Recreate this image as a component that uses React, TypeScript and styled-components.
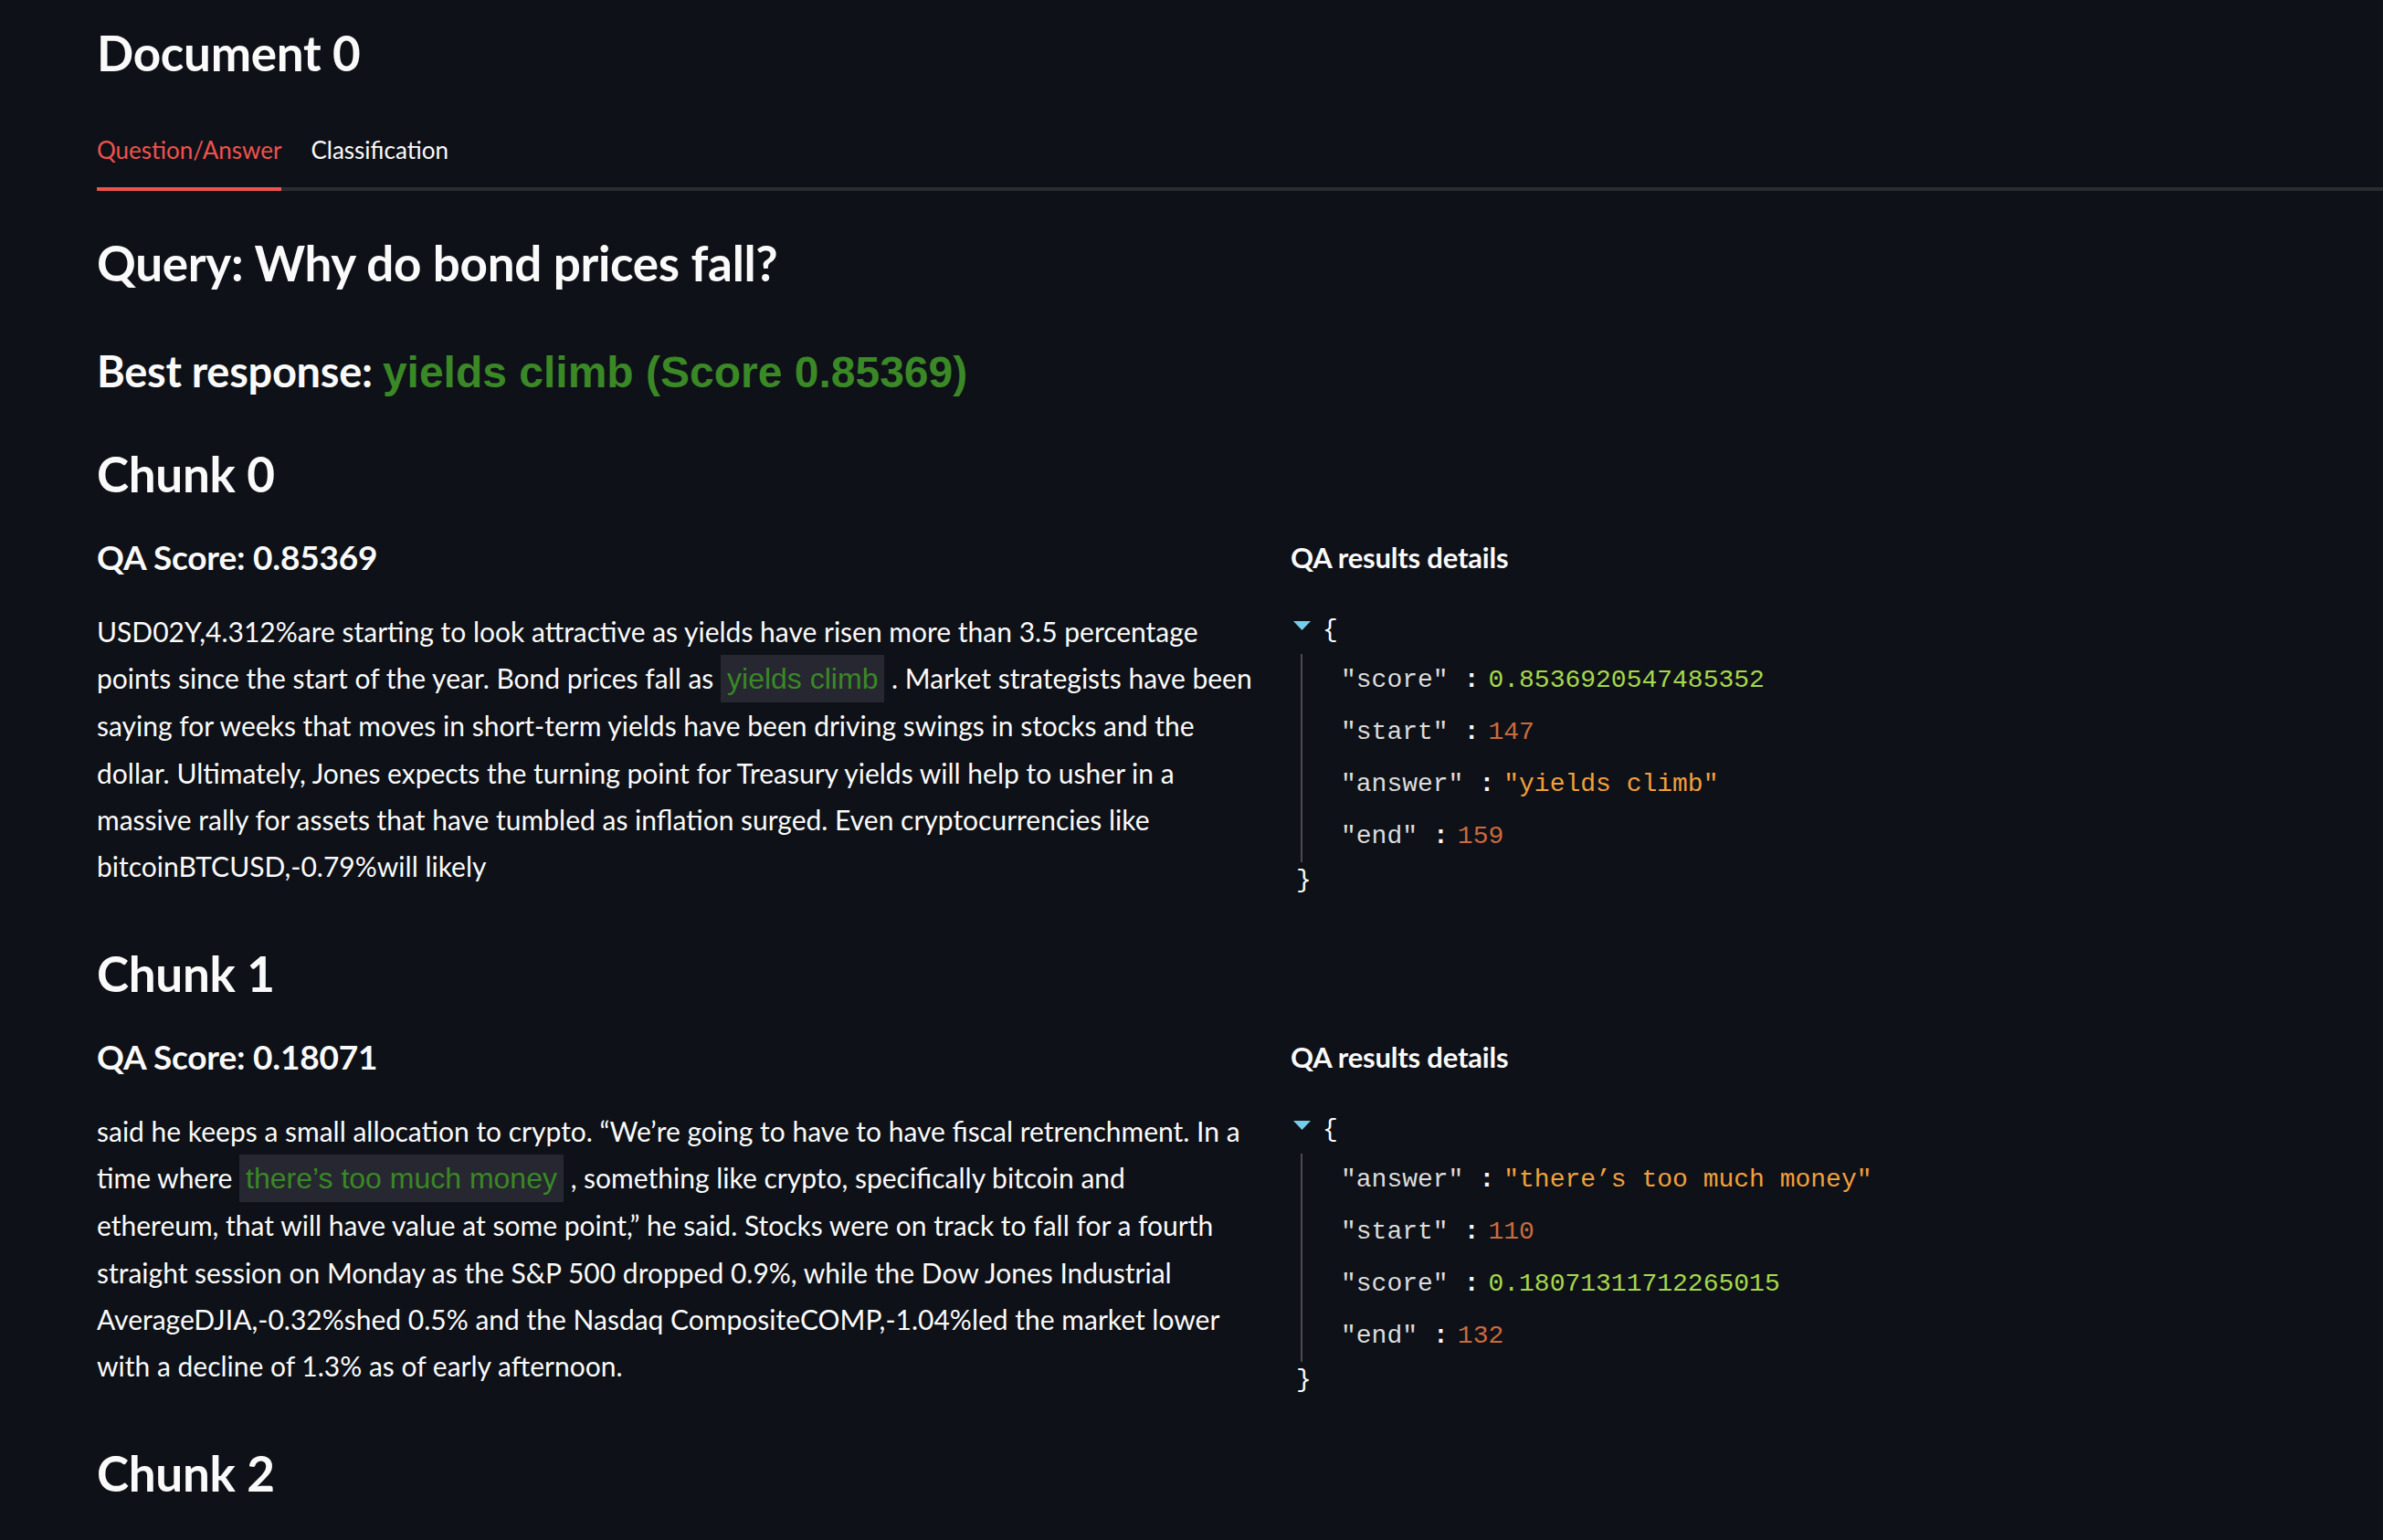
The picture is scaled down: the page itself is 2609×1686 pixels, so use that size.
import React from 'react';
import styled, { createGlobalStyle } from 'styled-components';

type Line = string | [string, string, string];
type JsonKind = 'float' | 'int' | 'string';

interface ChunkData {
  id: number;
  score: string;
  lines: Line[];
  json: [string, string, JsonKind][];
}

const chunks: ChunkData[] = [
  {
    id: 0,
    score: '0.85369',
    lines: [
      'USD02Y,4.312%are starting to look attractive as yields have risen more than 3.5 percentage',
      ['points since the start of the year. Bond prices fall as ', 'yields climb', ' . Market strategists have been'],
      'saying for weeks that moves in short-term yields have been driving swings in stocks and the',
      'dollar. Ultimately, Jones expects the turning point for Treasury yields will help to usher in a',
      'massive rally for assets that have tumbled as inflation surged. Even cryptocurrencies like',
      'bitcoinBTCUSD,-0.79%will likely',
    ],
    json: [
      ['"score"', '0.8536920547485352', 'float'],
      ['"start"', '147', 'int'],
      ['"answer"', '"yields climb"', 'string'],
      ['"end"', '159', 'int'],
    ],
  },
  {
    id: 1,
    score: '0.18071',
    lines: [
      'said he keeps a small allocation to crypto. \u201cWe\u2019re going to have to have fiscal retrenchment. In a',
      ['time where ', 'there\u2019s too much money', ' , something like crypto, specifically bitcoin and'],
      'ethereum, that will have value at some point,\u201d he said. Stocks were on track to fall for a fourth',
      'straight session on Monday as the S&P 500 dropped 0.9%, while the Dow Jones Industrial',
      'AverageDJIA,-0.32%shed 0.5% and the Nasdaq CompositeCOMP,-1.04%led the market lower',
      'with a decline of 1.3% as of early afternoon.',
    ],
    json: [
      ['"answer"', '"there\u2019s too much money"', 'string'],
      ['"start"', '110', 'int'],
      ['"score"', '0.18071311712265015', 'float'],
      ['"end"', '132', 'int'],
    ],
  },
];

const valueColors: Record<JsonKind, string> = {
  float: '#a6d84c',
  int: '#c96b3d',
  string: '#f0a03c',
};

const GlobalStyle = createGlobalStyle`
  html, body {
    margin: 0;
    padding: 0;
    background: #0e1117;
  }
  body {
    overflow: hidden;
    color: #fafafa;
    font-family: Lato, "Noto Sans", sans-serif;
  }
`;

const Page = styled.main`
  box-sizing: border-box;
  min-height: 1686px;
  padding: 18px 0 0 106px;
`;

const Heading = styled.h3`
  margin: 0;
  font-size: 53px;
  line-height: 80px;
  font-weight: 700;
  letter-spacing: -0.3px;
  white-space: nowrap;
`;

const QueryHeading = styled(Heading)`
  margin-top: 39px;
`;

const ResponseHeading = styled.h4`
  margin: 44px 0 0;
  font-size: 47px;
  line-height: 68px;
  font-weight: 700;
  letter-spacing: -0.3px;
  white-space: nowrap;
`;

const Answer = styled.span`
  font-family: "Liberation Sans", Arial, sans-serif;
  font-size: 48px;
  font-weight: 700;
  letter-spacing: 0;
  color: #3a8826;
`;

const TabBar = styled.div`
  display: flex;
  gap: 32px;
  margin-top: 30px;
  border-bottom: 4px solid #2b2c32;
`;

const Tab = styled.div<{ $active?: boolean }>`
  padding: 16px 0 21px;
  margin-bottom: -4px;
  font-size: 26px;
  line-height: 40px;
  color: ${p => (p.$active ? '#ef524e' : '#fafafa')};
  border-bottom: 4px solid ${p => (p.$active ? '#ef524e' : 'transparent')};
`;

const ChunkSection = styled.section`
  margin-top: 37px;
`;

const Row = styled.div`
  display: grid;
  grid-template-columns: 1275px 1fr;
  column-gap: 32px;
  align-items: start;
  margin-top: 23px;
  padding-bottom: 5px;
`;

const ScoreHeading = styled.h5`
  margin: 0;
  font-size: 37px;
  line-height: 56px;
  font-weight: 700;
  letter-spacing: -0.2px;
`;

const Paragraph = styled.p`
  margin: 28px 0 0;
  font-size: 30px;
  line-height: 51.2px;
`;

const TextLine = styled.span`
  display: block;
  white-space: nowrap;
`;

const Highlight = styled.span`
  padding: 8px 7px;
  background: #262730;
  color: #3a8826;
  font-family: "Liberation Sans", Arial, sans-serif;
  font-size: 32px;
`;

const DetailsLabel = styled.div`
  font-size: 31px;
  line-height: 56px;
  font-weight: 700;
  letter-spacing: -0.2px;
`;

const JsonBox = styled.div`
  margin-top: 26px;
  font-family: "Liberation Mono", "DejaVu Sans Mono", monospace;
  font-size: 28px;
`;

const JsonHead = styled.div`
  display: flex;
  align-items: flex-start;
  height: 52px;
  line-height: 52px;
`;

const Caret = styled.svg`
  margin: 16px 13px 0 3px;
  flex: none;
`;

const JsonBody = styled.div`
  margin-left: 11px;
  padding-left: 42px;
  border-left: 2px solid #4a4b50;
`;

const JsonRow = styled.div`
  height: 57px;
  line-height: 57px;
  white-space: nowrap;
`;

const Key = styled.span`
  color: #dcdcdc;
`;

const Colon = styled.span`
  margin: 0 10px 0 17px;
  color: #fafafa;
  font-weight: 700;
`;

const Value = styled.span<{ $kind: JsonKind }>`
  color: ${p => valueColors[p.$kind]};
`;

const JsonFoot = styled.div`
  margin-left: 6px;
  height: 40px;
  line-height: 40px;
`;

function Paragraphs({ lines }: { lines: Line[] }) {
  return (
    <Paragraph>
      {lines.map((line, i) =>
        typeof line === 'string' ? (
          <TextLine key={i}>{line}</TextLine>
        ) : (
          <TextLine key={i}>
            {line[0]}
            <Highlight>{line[1]}</Highlight>
            {line[2]}
          </TextLine>
        )
      )}
    </Paragraph>
  );
}

function JsonView({ entries }: { entries: ChunkData['json'] }) {
  return (
    <JsonBox>
      <JsonHead>
        <Caret width="19" height="10" viewBox="0 0 19 10">
          <path d="M0 0 H19 L9.5 10 Z" fill="#75cdea" />
        </Caret>
        <span>{'{'}</span>
      </JsonHead>
      <JsonBody>
        {entries.map(([k, v, kind]) => (
          <JsonRow key={k}>
            <Key>{k}</Key>
            <Colon>:</Colon>
            <Value $kind={kind}>{v}</Value>
          </JsonRow>
        ))}
      </JsonBody>
      <JsonFoot>{'}'}</JsonFoot>
    </JsonBox>
  );
}

export default function App() {
  return (
    <>
      <GlobalStyle />
      <Page>
        <Heading>Document 0</Heading>
        <TabBar>
          <Tab $active>Question/Answer</Tab>
          <Tab>Classification</Tab>
        </TabBar>
        <QueryHeading>Query: Why do bond prices fall?</QueryHeading>
        <ResponseHeading>
          Best response: <Answer>yields climb (Score 0.85369)</Answer>
        </ResponseHeading>
        {chunks.map(chunk => (
          <ChunkSection key={chunk.id}>
            <Heading>Chunk {chunk.id}</Heading>
            <Row>
              <div>
                <ScoreHeading>QA Score: {chunk.score}</ScoreHeading>
                <Paragraphs lines={chunk.lines} />
              </div>
              <div>
                <DetailsLabel>QA results details</DetailsLabel>
                <JsonView entries={chunk.json} />
              </div>
            </Row>
          </ChunkSection>
        ))}
        <ChunkSection>
          <Heading>Chunk 2</Heading>
        </ChunkSection>
      </Page>
    </>
  );
}
